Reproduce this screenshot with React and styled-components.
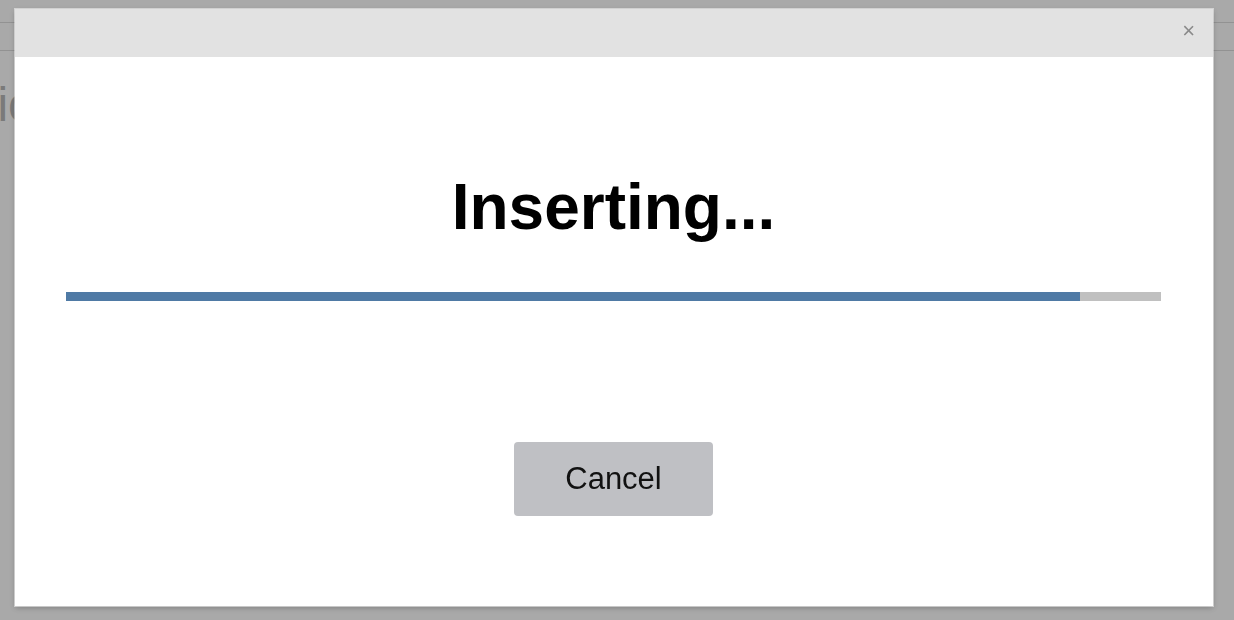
import React from "react";
import styled, { createGlobalStyle } from "styled-components";

const GlobalStyle = createGlobalStyle`
  html, body {
    margin: 0;
    padding: 0;
    background: #fff;
    font-family: "Liberation Sans", Arial, sans-serif;
  }
`;

const Page = styled.div`
  width: 1234px;
  height: 620px;
  overflow: hidden;
  background: #fafafa;
`;

const TopBar = styled.div`
  height: 22px;
  border-bottom: 1px solid #d8d8d8;
`;

const SubBar = styled.div`
  height: 27px;
  border-bottom: 1px solid #d8d8d8;
`;

const PageHeading = styled.h1`
  margin: 26px 0 0 -80px;
  font-size: 48px;
  font-weight: 400;
  color: #b4b4b4;
`;

const Overlay = styled.div`
  position: fixed;
  inset: 0;
  background: rgba(0, 0, 0, 0.32);
  display: flex;
  align-items: flex-start;
  padding: 9px 0 0 15px;
`;

const Modal = styled.div`
  width: 1198px;
  height: 597px;
  background: #fff;
  box-shadow: 0 0 0 1px rgba(255, 255, 255, 0.5), 0 2px 6px rgba(0, 0, 0, 0.25);
  display: flex;
  flex-direction: column;
`;

const Header = styled.div`
  height: 48px;
  background: #e2e2e2;
  display: flex;
  justify-content: flex-end;
  align-items: center;
  padding-right: 18px;
`;

const Close = styled.button`
  border: none;
  background: transparent;
  color: #8a8a8a;
  font-size: 22px;
  line-height: 1;
  padding: 0;
  margin-top: -4px;
  cursor: pointer;
  font-family: "Liberation Sans", Arial, sans-serif;
`;

const Body = styled.div`
  display: flex;
  flex-direction: column;
  align-items: center;
  padding: 113px 52px 0 51px;
`;

const Title = styled.h2`
  margin: 0;
  font-size: 64px;
  line-height: 74px;
  font-weight: 700;
  color: #000;
`;

const Track = styled.div`
  align-self: stretch;
  height: 9px;
  margin-top: 48px;
  background: #c0c0c0;
`;

const Fill = styled.div`
  height: 100%;
  background: #4f7aa5;
`;

const CancelButton = styled.button`
  margin-top: 141px;
  width: 199px;
  height: 74px;
  border: none;
  border-radius: 4px;
  background: #bfc0c4;
  color: #111;
  font-family: "Liberation Sans", Arial, sans-serif;
  font-size: 31px;
  cursor: pointer;
`;

export default function App() {
  const progress = 92.6;
  return (
    <>
      <GlobalStyle />
      <Page>
        <TopBar />
        <SubBar />
        <PageHeading>Topic</PageHeading>
      </Page>
      <Overlay>
        <Modal>
          <Header>
            <Close aria-label="Close">×</Close>
          </Header>
          <Body>
            <Title>Inserting...</Title>
            <Track>
              <Fill style={{ width: `${progress}%` }} />
            </Track>
            <CancelButton>Cancel</CancelButton>
          </Body>
        </Modal>
      </Overlay>
    </>
  );
}
